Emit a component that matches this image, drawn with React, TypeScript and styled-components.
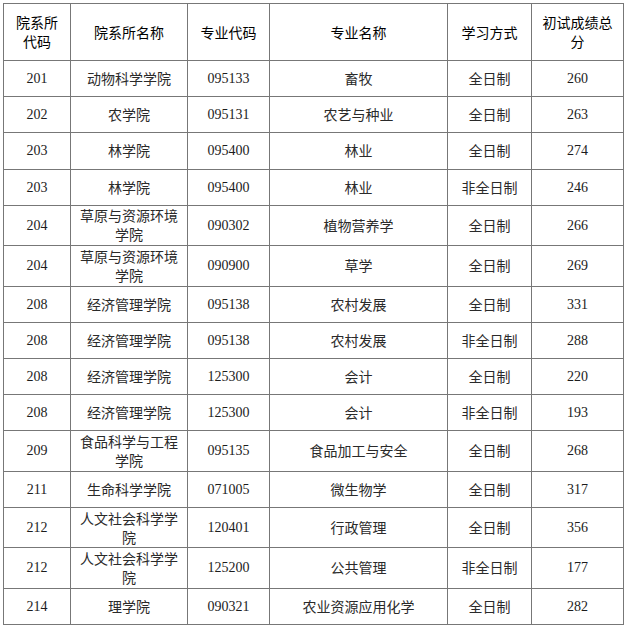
import styled, { createGlobalStyle } from 'styled-components'

const GlobalStyle = createGlobalStyle`
  html, body {
    margin: 0;
    padding: 0;
    background: #fff;
  }
`

const Page = styled.div`
  padding: 3px;
`

const Table = styled.table`
  width: 621px;
  table-layout: fixed;
  border-collapse: collapse;
  font-size: 14px;
`

const HeadCell = styled.th`
  height: 56px;
  padding: 0 7px;
  border: 1px solid #777;
  font-family: "Noto Sans CJK SC", sans-serif;
  font-weight: normal;
  line-height: 19px;
  color: #000;
  text-align: center;
  vertical-align: middle;
`

const Cell = styled.td<{ $tall?: boolean; $num?: boolean }>`
  height: ${(p) => (p.$tall ? '39.4px' : '35.2px')};
  padding: 0 7px;
  border: 1px solid #777;
  font-family: ${(p) =>
    p.$num ? '"Liberation Serif", serif' : '"Noto Sans CJK SC", sans-serif'};
  color: ${(p) => (p.$num ? '#1c1c1c' : '#2a2a2a')};
  line-height: 19px;
  text-align: center;
  vertical-align: middle;
`

type Row = {
  code: string
  school: string
  major: string
  name: string
  mode: string
  score: string
}

const widths = [67, 117, 82, 178, 84, 92]

const headers = ['院系所代码', '院系所名称', '专业代码', '专业名称', '学习方式', '初试成绩总分']

const rows: Row[] = [
  { code: '201', school: '动物科学学院', major: '095133', name: '畜牧', mode: '全日制', score: '260' },
  { code: '202', school: '农学院', major: '095131', name: '农艺与种业', mode: '全日制', score: '263' },
  { code: '203', school: '林学院', major: '095400', name: '林业', mode: '全日制', score: '274' },
  { code: '203', school: '林学院', major: '095400', name: '林业', mode: '非全日制', score: '246' },
  { code: '204', school: '草原与资源环境学院', major: '090302', name: '植物营养学', mode: '全日制', score: '266' },
  { code: '204', school: '草原与资源环境学院', major: '090900', name: '草学', mode: '全日制', score: '269' },
  { code: '208', school: '经济管理学院', major: '095138', name: '农村发展', mode: '全日制', score: '331' },
  { code: '208', school: '经济管理学院', major: '095138', name: '农村发展', mode: '非全日制', score: '288' },
  { code: '208', school: '经济管理学院', major: '125300', name: '会计', mode: '全日制', score: '220' },
  { code: '208', school: '经济管理学院', major: '125300', name: '会计', mode: '非全日制', score: '193' },
  { code: '209', school: '食品科学与工程学院', major: '095135', name: '食品加工与安全', mode: '全日制', score: '268' },
  { code: '211', school: '生命科学学院', major: '071005', name: '微生物学', mode: '全日制', score: '317' },
  { code: '212', school: '人文社会科学学院', major: '120401', name: '行政管理', mode: '全日制', score: '356' },
  { code: '212', school: '人文社会科学学院', major: '125200', name: '公共管理', mode: '非全日制', score: '177' },
  { code: '214', school: '理学院', major: '090321', name: '农业资源应用化学', mode: '全日制', score: '282' },
]

function App() {
  return (
    <Page>
      <GlobalStyle />
      <Table>
        <colgroup>
          {widths.map((w, i) => (
            <col key={i} style={{ width: w }} />
          ))}
        </colgroup>
        <thead>
          <tr>
            {headers.map((h) => (
              <HeadCell key={h}>{h}</HeadCell>
            ))}
          </tr>
        </thead>
        <tbody>
          {rows.map((r, i) => {
            const tall = r.school.length > 7
            return (
              <tr key={i}>
                <Cell $tall={tall} $num>{r.code}</Cell>
                <Cell $tall={tall}>{r.school}</Cell>
                <Cell $tall={tall} $num>{r.major}</Cell>
                <Cell $tall={tall}>{r.name}</Cell>
                <Cell $tall={tall}>{r.mode}</Cell>
                <Cell $tall={tall} $num>{r.score}</Cell>
              </tr>
            )
          })}
        </tbody>
      </Table>
    </Page>
  )
}

export default App
